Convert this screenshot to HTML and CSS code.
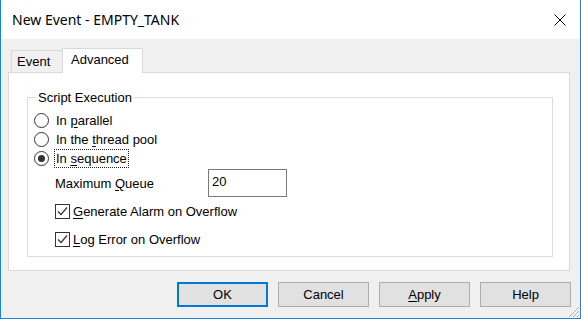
FILE: index.html
```html
<!DOCTYPE html>
<html>
<head>
<meta charset="utf-8">
<link rel="stylesheet" href="styles.css">
</head>
<body>
<div class="window">
  <div class="titlebar">
    <span class="title">New Event - EMPTY_TANK</span>
    <svg class="close" width="12" height="12" viewBox="0 0 12 12"><path d="M0.5 0.5 L11.5 11.5 M11.5 0.5 L0.5 11.5" stroke="#000" stroke-width="1" fill="none"/></svg>
  </div>
  <div class="body">
    <div class="tabs">
      <div class="tab tab-event">Event</div>
      <div class="tab tab-adv">Advanced</div>
    </div>
    <div class="panel">
      <div class="group">
        <div class="legend">Script Execution</div>
        <div class="radios">
          <div class="radio"><span class="circle"></span><span class="rlabel">In <u>p</u>arallel</span></div>
          <div class="radio"><span class="circle"></span><span class="rlabel">In the <u>t</u>hread pool</span></div>
          <div class="radio"><span class="circle checked"></span><span class="rlabel focus">In <u>s</u>equence</span></div>
        </div>
        <div class="queue">
          <span class="qlabel">Maximum <u>Q</u>ueue</span>
          <div class="input">20</div>
        </div>
        <div class="check first"><span class="box"><svg width="13" height="13" viewBox="0 0 13 13"><path d="M2 6.5 L5 9.5 L11 2.5" stroke="#333" stroke-width="1.2" fill="none"/></svg></span><span class="clabel"><u>G</u>enerate Alarm on Overflow</span></div>
        <div class="check second"><span class="box"><svg width="13" height="13" viewBox="0 0 13 13"><path d="M2 6.5 L5 9.5 L11 2.5" stroke="#333" stroke-width="1.2" fill="none"/></svg></span><span class="clabel"><u>L</u>og Error on Overflow</span></div>
      </div>
    </div>
    <div class="buttons">
      <div class="btn default">OK</div>
      <div class="btn">Cancel</div>
      <div class="btn"><u>A</u>pply</div>
      <div class="btn">Help</div>
    </div>
  </div>
  <svg class="grip" width="12" height="12" viewBox="0 0 12 12">
    <path d="M11 1 L1 11 M11 5 L5 11 M11 9 L9 11" stroke="#b0b0b0" stroke-width="1" fill="none"/>
  </svg>
</div>
</body>
</html>
```
FILE: styles.css
```css
body {
  margin: 0;
  font-family: "Liberation Sans", Arial, sans-serif;
  font-size: 13px;
  color: #000;
}
u { text-decoration: underline; text-underline-offset: 2px; }

.window {
  position: relative;
  width: 581px;
  height: 319px;
  box-sizing: border-box;
  border: 1px solid #1883d7;
  border-top: 0;
  background: #f0f0f0;
  display: flex;
  flex-direction: column;
}

.titlebar {
  height: 39px;
  flex: none;
  background: #fff;
  display: flex;
  align-items: center;
  justify-content: space-between;
  padding: 0 14px 0 11px;
}
.title {
  font-family: "Noto Sans", sans-serif;
  font-size: 14px;
  color: #000;
}
.close { display: block; }

.body {
  flex: 1;
  padding: 9px 10px 0 7px;
  display: flex;
  flex-direction: column;
}

.tabs {
  display: flex;
  align-items: flex-end;
  height: 25px;
  padding-left: 3px;
  margin-bottom: -1px;
  position: relative;
  z-index: 1;
}
.tab {
  box-sizing: border-box;
  border: 1px solid #d9d9d9;
  border-bottom: 0;
}
.tab-event {
  width: 51px;
  height: 22px;
  margin-bottom: 1px;
  border-right: 0;
  background: #f0f0f0;
  padding-left: 5px;
  line-height: 21px;
}
.tab-adv {
  width: 81px;
  height: 25px;
  background: #fff;
  padding-left: 8px;
  line-height: 22px;
}

.panel {
  height: 199px;
  box-sizing: border-box;
  border: 1px solid #d9d9d9;
  background: #fff;
  padding: 24px 16px 13px 18px;
  display: flex;
}
.group {
  flex: 1;
  border: 1px solid #dcdcdc;
  display: flex;
  flex-direction: column;
}
.legend {
  align-self: flex-start;
  margin: -8px 0 0 8px;
  padding: 0 2px;
  background: #fff;
  line-height: 15px;
}

.radios {
  margin-top: 6px;
  padding-left: 6px;
  display: flex;
  flex-direction: column;
}
.radio {
  height: 19px;
  display: flex;
  align-items: center;
}
.circle {
  width: 13px;
  height: 13px;
  border: 1px solid #333;
  border-radius: 50%;
  background: #fff;
  display: flex;
  align-items: center;
  justify-content: center;
}
.circle.checked::after {
  content: "";
  width: 7px;
  height: 7px;
  border-radius: 50%;
  background: #333;
}
.rlabel {
  margin-left: 5px;
  border: 1px dotted transparent;
  padding: 0 1px;
  line-height: 17px;
}
.rlabel.focus { border-color: #222; }

.queue {
  margin-top: 1px;
  padding-left: 27px;
  display: flex;
  align-items: center;
}
.qlabel { width: 153px; }
.input {
  width: 79px;
  height: 28px;
  box-sizing: border-box;
  border: 1px solid #7a7a7a;
  background: #fff;
  padding: 4px 3px;
  line-height: 15px;
}

.check {
  height: 19px;
  padding-left: 27px;
  display: flex;
  align-items: center;
}
.check.first { margin-top: 5px; }
.check.second { margin-top: 9px; }
.box {
  width: 13px;
  height: 13px;
  border: 1px solid #333;
  background: #fff;
  display: flex;
}
.clabel { margin-left: 3px; }

.buttons {
  margin-top: 11px;
  margin-right: -1px;
  display: flex;
  justify-content: flex-end;
  gap: 10px;
}
.btn {
  width: 91px;
  height: 25px;
  box-sizing: border-box;
  border: 1px solid #adadad;
  background: #e1e1e1;
  text-align: center;
  line-height: 23px;
}
.btn.default {
  border: 2px solid #0078d7;
  line-height: 21px;
}

.grip {
  position: absolute;
  right: 0;
  bottom: 0;
}
```
